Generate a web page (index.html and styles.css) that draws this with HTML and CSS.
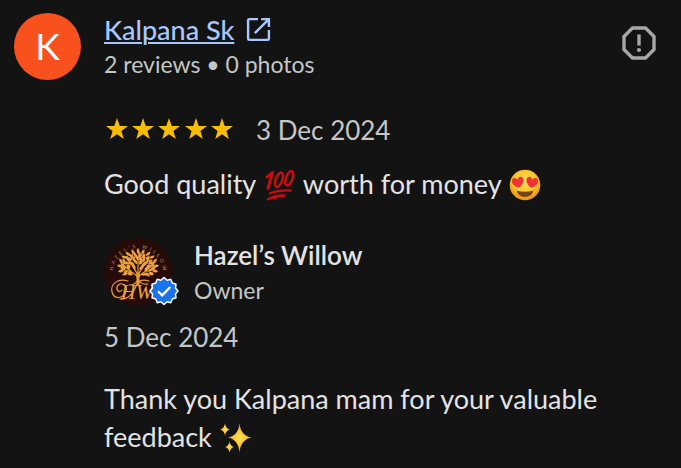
FILE: index.html
```
<!DOCTYPE html>
<html lang="en">
<head>
<meta charset="utf-8">
<meta name="viewport" content="width=device-width, initial-scale=1">
<title>Review by Kalpana Sk</title>
<link rel="stylesheet" href="styles.css">
</head>
<body>
<article class="review">
  <header class="reviewer">
    <div class="avatar" aria-hidden="true">K</div>
    <div class="reviewer-info">
      <a class="reviewer-name" href="#"><span class="name-text">Kalpana Sk</span><svg class="open-icon" viewBox="0 0 24 24" aria-hidden="true"><path d="M11.500 2H3.200Q2 2 2 3.200V20.800Q2 22 3.200 22H20.800Q22 22 22 20.800V12.500M14.500 2H22V9.500M21.500 2.500L8.500 15.500"/></svg></a>
      <p class="meta">2 reviews • 0 photos</p>
    </div>
    <button class="report" type="button" aria-label="Report review">
      <svg viewBox="0 0 36 36" aria-hidden="true"><path class="report-ring" d="M11.500 3h13L33 11.500v13L24.500 33h-13L3 24.500v-13z"/><path class="report-mark" d="M16.300 9.500h3.400v11h-3.400z"/><circle class="report-mark" cx="18" cy="25" r="2.100"/></svg>
    </button>
  </header>

  <div class="content">
    <div class="rating">
      <svg class="stars" viewBox="-1 1 130 24" role="img" aria-label="5 out of 5 stars">
        <defs><path id="star" d="M12 1l2.700 7.900 8.300.1-6.600 5 2.400 8L12 17.200 5.200 22l2.400-8L1 9l8.300-.1z"/></defs>
        <use href="#star"/><use href="#star" x="26"/><use href="#star" x="52"/><use href="#star" x="79"/><use href="#star" x="105"/>
      </svg>
      <time class="date" datetime="2024-12-03">3 Dec 2024</time>
    </div>

    <p class="text">Good quality
      <svg class="emoji" viewBox="0 0 32 32" role="img" aria-label="Hundred points">
        <g fill="none" stroke="#c90d10" stroke-linecap="round" stroke-linejoin="round">
          <path stroke-width="2.900" d="M3 8L8.500 3.500L4 19.500"/>
          <ellipse stroke-width="2.500" cx="15" cy="10.700" rx="3.300" ry="7.600" transform="rotate(20 15 10.700)"/>
          <ellipse stroke-width="2.500" cx="25.300" cy="9.300" rx="3.300" ry="7.600" transform="rotate(20 25.300 9.300)"/>
          <path stroke-width="2.300" d="M6 24.300Q15 20.800 26.500 21.600"/>
          <path stroke-width="2.300" d="M4 30.300Q11 26.300 20.500 26.500Q13 27 10 29"/>
        </g>
      </svg>
      worth for money
      <svg class="emoji" viewBox="0 0 32 32" role="img" aria-label="Smiling face with heart eyes">
        <defs><radialGradient id="face" cx=".5" cy=".4" r=".6"><stop offset="0" stop-color="#ffe052"/><stop offset=".6" stop-color="#fdc52f"/><stop offset="1" stop-color="#e98d12"/></radialGradient>
        <path id="heart" d="M0 6C-5 3-6.500 0-5.500-2.800C-4.500-5.500-1-5 0-2.300C1-5 4.500-5.500 5.500-2.800C6.500 0 5 3 0 6z"/></defs>
        <circle cx="16" cy="16" r="15.300" fill="url(#face)"/>
        <use href="#heart" fill="#ec3434" transform="translate(9 13) rotate(-12)"/>
        <use href="#heart" fill="#ec3434" transform="translate(23 13) rotate(12)"/>
        <path d="M7.500 21.500Q16 24 24.500 21.500Q23 28 16 28T7.500 21.500z" fill="#76420d"/>
      </svg>
    </p>

    <section class="reply">
      <div class="owner">
        <div class="logo-wrap">
          <svg class="logo" viewBox="0 0 68 68" role="img" aria-label="Hazel's Willow logo">
            <defs>
              <path id="ring" d="M10 42A25 25 0 1 1 58 42"/>
              <path id="leaf" d="M0 3.100Q-2.800 0 0-3.100Q2.800 0 0 3.100z"/>
            </defs>
            <circle cx="34" cy="34" r="34" fill="#270b09"/>
            <text class="ring-text"><textPath href="#ring" startOffset="50%">H&#160;&#160;A&#160;&#160;Z&#160;&#160;E&#160;&#160;L&#160;&#160;'&#160;&#160;S&#160;&#160;&#160;&#160;&#160;W&#160;&#160;I&#160;&#160;L&#160;&#160;L&#160;&#160;O&#160;&#160;W</textPath></text>
            <g fill="none" stroke="#e89c35" stroke-linecap="round">
              <path stroke-width="3" d="M34 46V36"/>
              <path stroke-width="1.200" d="M34 40Q30 33 20 32M34 40Q38 33 48 32M34 38Q31 30 25 24M34 38Q37 30 43 24M34 38V18M27 33L18 27M41 33L50 27M33 43Q31 47 25 47M35 43Q38 47 44 46"/>
            </g>
            <g id="leaves" fill="#efa33b">
              <use href="#leaf" transform="translate(34 13)"/>
              <use href="#leaf" transform="translate(29 14) rotate(-25)"/><use href="#leaf" transform="translate(39 14) rotate(25)"/>
              <use href="#leaf" transform="translate(24 16) rotate(-50)"/><use href="#leaf" transform="translate(44 16) rotate(50)"/>
              <use href="#leaf" transform="translate(32 18) rotate(-40)"/><use href="#leaf" transform="translate(36 18) rotate(40)"/>
              <use href="#leaf" transform="translate(28 19) rotate(10)"/><use href="#leaf" transform="translate(40 19) rotate(-10)"/>
              <use href="#leaf" transform="translate(20 19) rotate(-65)"/><use href="#leaf" transform="translate(48 19) rotate(65)"/>
              <use href="#leaf" transform="translate(24 21) rotate(-20)"/><use href="#leaf" transform="translate(44 21) rotate(20)"/>
              <use href="#leaf" transform="translate(31 23) rotate(-45)"/><use href="#leaf" transform="translate(37 23) rotate(45)"/>
              <use href="#leaf" transform="translate(17 23) rotate(-35)"/><use href="#leaf" transform="translate(51 23) rotate(35)"/>
              <use href="#leaf" transform="translate(21 25) rotate(-75)"/><use href="#leaf" transform="translate(47 25) rotate(75)"/>
              <use href="#leaf" transform="translate(27 25) rotate(-65)"/><use href="#leaf" transform="translate(41 25) rotate(65)"/>
              <use href="#leaf" transform="translate(16 28) rotate(-75)"/><use href="#leaf" transform="translate(52 28) rotate(75)"/>
              <use href="#leaf" transform="translate(24 29) rotate(-20)"/><use href="#leaf" transform="translate(44 29) rotate(20)"/>
              <use href="#leaf" transform="translate(30 29) rotate(-20)"/><use href="#leaf" transform="translate(38 29) rotate(20)"/>
              <use href="#leaf" transform="translate(19 30) rotate(-55)"/><use href="#leaf" transform="translate(49 30) rotate(55)"/>
              <use href="#leaf" transform="translate(17 33) rotate(-100)"/><use href="#leaf" transform="translate(51 33) rotate(100)"/>
              <use href="#leaf" transform="translate(21 36) rotate(-110)"/><use href="#leaf" transform="translate(47 36) rotate(110)"/>
              <use href="#leaf" transform="translate(26 36) rotate(-80)"/><use href="#leaf" transform="translate(42 36) rotate(80)"/>
            </g>
            <use href="#leaves" transform="translate(5 5) scale(.85) rotate(8 34 26)"/>
            <g fill="none" stroke="#e89c35" stroke-width="1.200" stroke-linecap="round">
              <path d="M24 43C14 40 6 46 8 54C10 62 20 61 22 53C24 46 15 43 13 49C12 53 16 55 18 52M16 61C24 62 29 56 33 46C36 41 42 42 45 43"/>
            </g>
            <text class="monogram" x="17" y="61">H</text><text class="monogram" x="32" y="61">W</text>
          </svg>
          <svg class="badge" viewBox="0 0 30 30" role="img" aria-label="Verified">
            <path fill="#1a73e8" stroke="#fff" stroke-width="1.500" stroke-linejoin="round" d="M15 1.500L18.200 4.200L21.800 3.300L23.300 7L27 8.200L26.500 12L29 15L26.500 18L27 21.800L23.300 23L21.800 26.700L18.200 25.800L15 28.500L11.800 25.800L8.200 26.700L6.700 23L3 21.800L3.500 18L1 15L3.500 12L3 8.200L6.700 7L8.200 3.300L11.800 4.200z"/>
            <path fill="none" stroke="#fff" stroke-width="2.300" d="M9 15.200L13.200 19.300L21.300 11"/>
          </svg>
        </div>
        <div class="owner-info">
          <h2 class="owner-name">Hazel’s Willow</h2>
          <p class="meta">Owner</p>
        </div>
      </div>
      <time class="date reply-date" datetime="2024-12-05">5 Dec 2024</time>
      <p class="text">Thank you Kalpana mam for your valuable feedback
        <svg class="emoji" viewBox="0 0 32 32" role="img" aria-label="Sparkles">
          <defs><radialGradient id="glow"><stop offset="0" stop-color="#ffe14a"/><stop offset=".5" stop-color="#fbc834"/><stop offset="1" stop-color="#c98a2c"/></radialGradient></defs>
          <g fill="url(#glow)">
            <path d="M19.500 1Q20.500 14 32 15.500Q20.500 17 19.500 31Q18.500 17 7.500 15.500Q18.500 14 19.500 1z"/>
            <path d="M5 1Q5.500 6.500 10 7.500Q5.500 8.500 5 14Q4.500 8.500 0 7.500Q4.500 6.500 5 1z"/>
            <path d="M9.500 19Q10 24 14 25Q10 26 9.500 31Q9 26 5 25Q9 24 9.500 19z"/>
          </g>
        </svg>
      </p>
    </section>
  </div>
</article>
</body>
</html>
```
FILE: styles.css
```
* { box-sizing: border-box; }

body {
  margin: 0;
  background: #131313;
  color: #e3e3e3;
  font-family: Lato, "Liberation Sans", sans-serif;
}

p, h2 { margin: 0; }

.review { padding: 12px 24px 12px 14px; }

.reviewer { display: flex; align-items: flex-start; }

.avatar {
  display: flex;
  align-items: center;
  justify-content: center;
  flex: none;
  width: 67px;
  height: 67px;
  margin: 1px 23px 0 0;
  border-radius: 50%;
  background: #f9511d;
  color: #fff;
  font-size: 37px;
  line-height: 35px;
  padding-bottom: 2px;
}

.reviewer-info { flex: 1; }

.reviewer-name {
  display: flex;
  align-items: center;
  gap: 12px;
  color: #a8c7fa;
  font-size: 27px;
  font-weight: 500;
  line-height: 35px;
  text-decoration: none;
}

.name-text {
  text-decoration: underline;
  text-decoration-thickness: 2px;
  text-underline-offset: 2px;
}

.open-icon {
  width: 25px;
  height: 25px;
  fill: none;
  stroke: currentColor;
  stroke-width: 2.300;
}

.meta { color: #c4c7c5; font-size: 23px; line-height: 35px; }

.report {
  width: 36px;
  height: 36px;
  margin: 13px 0 0;
  padding: 0;
  border: 0;
  background: none;
  cursor: pointer;
}

.report svg { display: block; width: 100%; height: 100%; }
.report-ring { fill: none; stroke: #a5a8ab; stroke-width: 3.400; }
.report-mark { fill: #a5a8ab; }

.content { padding: 31px 0 0 90px; }

.rating { display: flex; align-items: center; gap: 22px; }

.stars { width: 130px; height: 24px; fill: #fbbc04; }

.date { color: #c4c7c5; font-size: 26px; line-height: 34px; }

.text { font-size: 27px; line-height: 38px; }

.rating + .text { margin-top: 18px; }

.emoji { width: 32px; height: 32px; margin: -3px 1px; vertical-align: -4px; }

.reply { margin-top: 35px; }

.owner { display: flex; gap: 22px; }

.logo-wrap { position: relative; flex: none; width: 68px; height: 68px; }

.logo { display: block; width: 100%; height: 100%; }

.ring-text { fill: #c98a3a; font: 5px Lato, sans-serif; text-anchor: middle; }

.monogram { fill: #efa33b; font: italic 20px "Liberation Serif", serif; }

.badge { position: absolute; right: -7px; bottom: 0; width: 30px; height: 30px; }

.owner-name { font-size: 26px; font-weight: 600; line-height: 35px; }

.reply-date { display: block; margin: 12px 0 26px; }
```
